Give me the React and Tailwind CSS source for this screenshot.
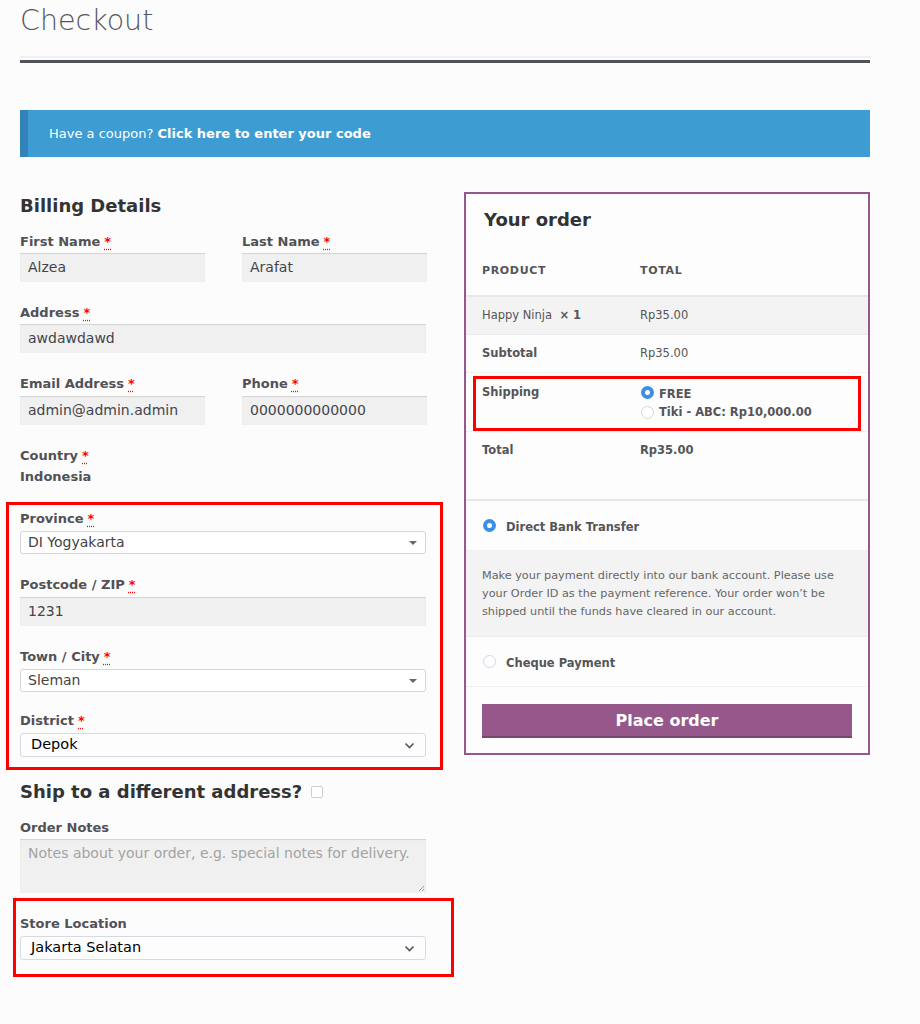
import React from 'react'

const font = "font-['DejaVu_Sans',sans-serif]"

function Req() {
  return (
    <abbr className="ml-[4px] text-[#ff0000] no-underline [text-decoration:underline_dotted] [text-underline-offset:3px]" title="required">
      *
    </abbr>
  )
}

function Label({ children, req }) {
  return (
    <div className="text-[13px] font-bold leading-[18px] text-[#515156]">
      {children}
      {req && <Req />}
    </div>
  )
}

function TextInput({ value, className = '' }) {
  return (
    <div
      className={`mt-[2px] flex h-[29px] items-center bg-[#f0f0f0] px-[8px] text-[14px] text-[#43454b] shadow-[inset_0_1px_1px_rgba(0,0,0,0.125)] ${className}`}
    >
      {value}
    </div>
  )
}

function Select2({ value }) {
  return (
    <div className="mt-[3px] flex h-[23px] items-center justify-between rounded-[3px] border border-[#d6d6d6] bg-white pl-[7px] pr-[8px] text-[14px] text-[#444]">
      <span>{value}</span>
      <span className="h-0 w-0 border-x-[4px] border-t-[4px] border-x-transparent border-t-[#666]" />
    </div>
  )
}

function NativeSelect({ value }) {
  return (
    <div className="mt-[3px] flex h-[24px] items-center justify-between rounded-[3px] border border-[#d5dbe3] bg-[#fdfdfd] pl-[10px] pr-[10px] text-[14.5px] text-black">
      <span>{value}</span>
      <svg width="11" height="7" viewBox="0 0 11 7" fill="none">
        <path d="M1.5 1.5L5.5 5.5L9.5 1.5" stroke="#555" strokeWidth="1.6" />
      </svg>
    </div>
  )
}

function Radio({ checked }) {
  return checked ? (
    <span className="flex h-[13px] w-[13px] shrink-0 items-center justify-center rounded-full bg-[#3d8ee6]">
      <span className="h-[5px] w-[5px] rounded-full bg-white" />
    </span>
  ) : (
    <span className="h-[13px] w-[13px] shrink-0 rounded-full border border-[#d3d8df] bg-white" />
  )
}

export default function App() {
  return (
    <div className={`min-h-[1024px] bg-[#fcfcfc] ${font}`}>
      <div className="ml-[20px] w-[850px]">
        {/* page header */}
        <h1 className="pt-[2px] font-['DejaVu_Sans_ExtraLight','DejaVu_Sans',sans-serif] text-[28.5px] font-extralight leading-[38px] text-[#55575d]">
          Checkout
        </h1>
        <div className="mt-[16px] h-[2px] bg-[#f0f0f0]" />
        <div className="mt-[2px] h-[3px] bg-[#505358]" />

        {/* coupon */}
        <div className="mt-[47px] flex h-[47px] items-center border-l-[8px] border-[#3183b8] bg-[#3d9cd2] pl-[21px] text-[13px] text-white">
          Have a coupon?&nbsp;<span className="font-bold">Click here to enter your code</span>
        </div>

        <div className="mt-[35px] grid grid-cols-[406px_406px] gap-x-[38px]">
          {/* billing */}
          <div>
            <h3 className="mt-[2px] text-[18px] font-bold leading-[24px] text-[#333]">Billing Details</h3>

            <div className="mt-[15px] grid grid-cols-[185px_185px] gap-x-[37px]">
              <div>
                <Label req>First Name</Label>
                <TextInput value="Alzea" />
              </div>
              <div>
                <Label req>Last Name</Label>
                <TextInput value="Arafat" />
              </div>
            </div>

            <div className="mt-[22px]">
              <Label req>Address</Label>
              <TextInput value="awdawdawd" />
            </div>

            <div className="mt-[22px] grid grid-cols-[185px_185px] gap-x-[37px]">
              <div>
                <Label req>Email Address</Label>
                <TextInput value="admin@admin.admin" className="mt-[3px]" />
              </div>
              <div>
                <Label req>Phone</Label>
                <TextInput value="0000000000000" className="mt-[3px]" />
              </div>
            </div>

            <div className="mt-[22px]">
              <Label req>Country</Label>
              <div className="mt-[3px] text-[13px] font-bold leading-[18px] text-[#515156]">Indonesia</div>
            </div>

            <div className="-ml-[14px] mt-[16px] w-[437px] border-[3px] border-[#ff0000] pb-[10px] pl-[11px] pr-[14px] pt-[5px]">
              <Label req>Province</Label>
              <Select2 value="DI Yogyakarta" />

              <div className="mt-[22px]">
                <Label req>Postcode / ZIP</Label>
                <TextInput value="1231" className="mt-[3px]" />
              </div>

              <div className="mt-[22px]">
                <Label req>Town / City</Label>
                <Select2 value="Sleman" />
              </div>

              <div className="mt-[20px]">
                <Label req>District</Label>
                <NativeSelect value="Depok" />
              </div>
            </div>

            <div className="mt-[10px] flex items-center">
              <h3 className="text-[18px] font-bold leading-[24px] text-[#333]">Ship to a different address?</h3>
              <span className="ml-[9px] h-[12px] w-[12px] rounded-[2px] border border-[#cfcfcf] bg-white" />
            </div>

            <div className="mt-[15px]">
              <Label>Order Notes</Label>
              <div className="relative mt-[2px] h-[54px] bg-[#f0f0f0] px-[8px] pt-[5px] text-[14px] leading-[18px] text-[#a3a3a3] shadow-[inset_0_1px_1px_rgba(0,0,0,0.125)]">
                Notes about your order, e.g. special notes for delivery.
                <svg className="absolute bottom-[1px] right-[1px]" width="7" height="7" viewBox="0 0 7 7">
                  <path d="M6 1L1 6M6 4L4 6" stroke="#9a9a9a" strokeWidth="1" />
                </svg>
              </div>
            </div>

            <div className="-ml-[7px] mt-[5px] w-[441px] border-[3px] border-[#ff0000] pb-[14px] pl-[4px] pr-[25px] pt-[14px]">
              <Label>Store Location</Label>
              <NativeSelect value="Jakarta Selatan" />
            </div>
          </div>

          {/* order review */}
          <div className="h-[563px] border-2 border-[#96588a] bg-[#fdfdfd]">
            <h3 className="pl-[18px] pt-[14px] text-[18px] font-bold leading-[24px] text-[#333]">Your order</h3>

            <div className="mt-[31px] grid grid-cols-[174px_1fr] pb-[16px] text-[11px] font-bold uppercase leading-[16px] tracking-[0.06em] text-[#555559]">
              <div className="pl-[16px]">Product</div>
              <div>Total</div>
            </div>

            <div className="border-t-2 border-[#e8e8e8]">
              <div className="grid h-[38px] grid-cols-[174px_1fr] items-center border-b border-dotted border-[#e4e4e4] bg-[#f3f3f3] pt-[1px] text-[11.5px] text-[#555559]">
                <div className="pl-[16px]">
                  Happy Ninja&nbsp; <span className="font-bold">× 1</span>
                </div>
                <div>Rp35.00</div>
              </div>
              <div className="grid h-[38px] grid-cols-[174px_1fr] items-center border-b border-dotted border-[#e4e4e4] text-[11.5px] text-[#555559]">
                <div className="pl-[16px] font-bold">Subtotal</div>
                <div>Rp35.00</div>
              </div>

              <div className="border-b border-dotted border-[#e4e4e4] px-[7px] pt-[3px] pb-[0px]">
                <div className="grid h-[55px] grid-cols-[159px_1fr] border-[3px] border-[#ff0000] pl-[6px] pt-[4px] text-[11.5px] font-bold text-[#555559]">
                  <div className="pt-[1px] leading-[16px]">Shipping</div>
                  <div className="flex flex-col">
                    <div className="flex items-center gap-[5px] leading-[16px]">
                      <Radio checked />
                      <span className="mt-[3px]">FREE</span>
                    </div>
                    <div className="mt-[2px] flex items-center gap-[5px] leading-[16px]">
                      <Radio />
                      <span>Tiki - ABC: Rp10,000.00</span>
                    </div>
                  </div>
                </div>
              </div>

              <div className="grid h-[67px] grid-cols-[174px_1fr] pt-[10px] text-[11.5px] font-bold leading-[16px] text-[#555559]">
                <div className="pl-[16px]">Total</div>
                <div>Rp35.00</div>
              </div>
            </div>

            <div className="border-t-2 border-[#e8e8e8]">
              <div className="flex h-[50px] items-center border-b border-dotted border-[#e4e4e4] pl-[17px] text-[11.5px] font-bold text-[#555559]">
                <Radio checked />
                <span className="ml-[10px] mt-[5px]">Direct Bank Transfer</span>
              </div>
              <div className="h-[86px] border-b border-dotted border-[#e4e4e4] bg-[#f3f3f3] pl-[16px] pr-[22px] pt-[16px] text-[11.25px] leading-[18px] text-[#666]">
                Make your payment directly into our bank account. Please use your Order ID as the payment reference. Your order won’t be shipped until the funds have cleared in our account.
              </div>
              <div className="flex h-[50px] items-center border-b border-dotted border-[#e4e4e4] pl-[17px] text-[11.5px] font-bold text-[#555559]">
                <Radio />
                <span className="ml-[10px] mt-[5px]">Cheque Payment</span>
              </div>
              <div className="px-[16px] pt-[17px]">
                <div className="flex h-[34px] items-center justify-center bg-[#96588a] text-[16px] font-bold text-white shadow-[inset_0_-2px_0_rgba(0,0,0,0.2)]">
                  Place order
                </div>
              </div>
            </div>
          </div>
        </div>
      </div>
    </div>
  )
}
